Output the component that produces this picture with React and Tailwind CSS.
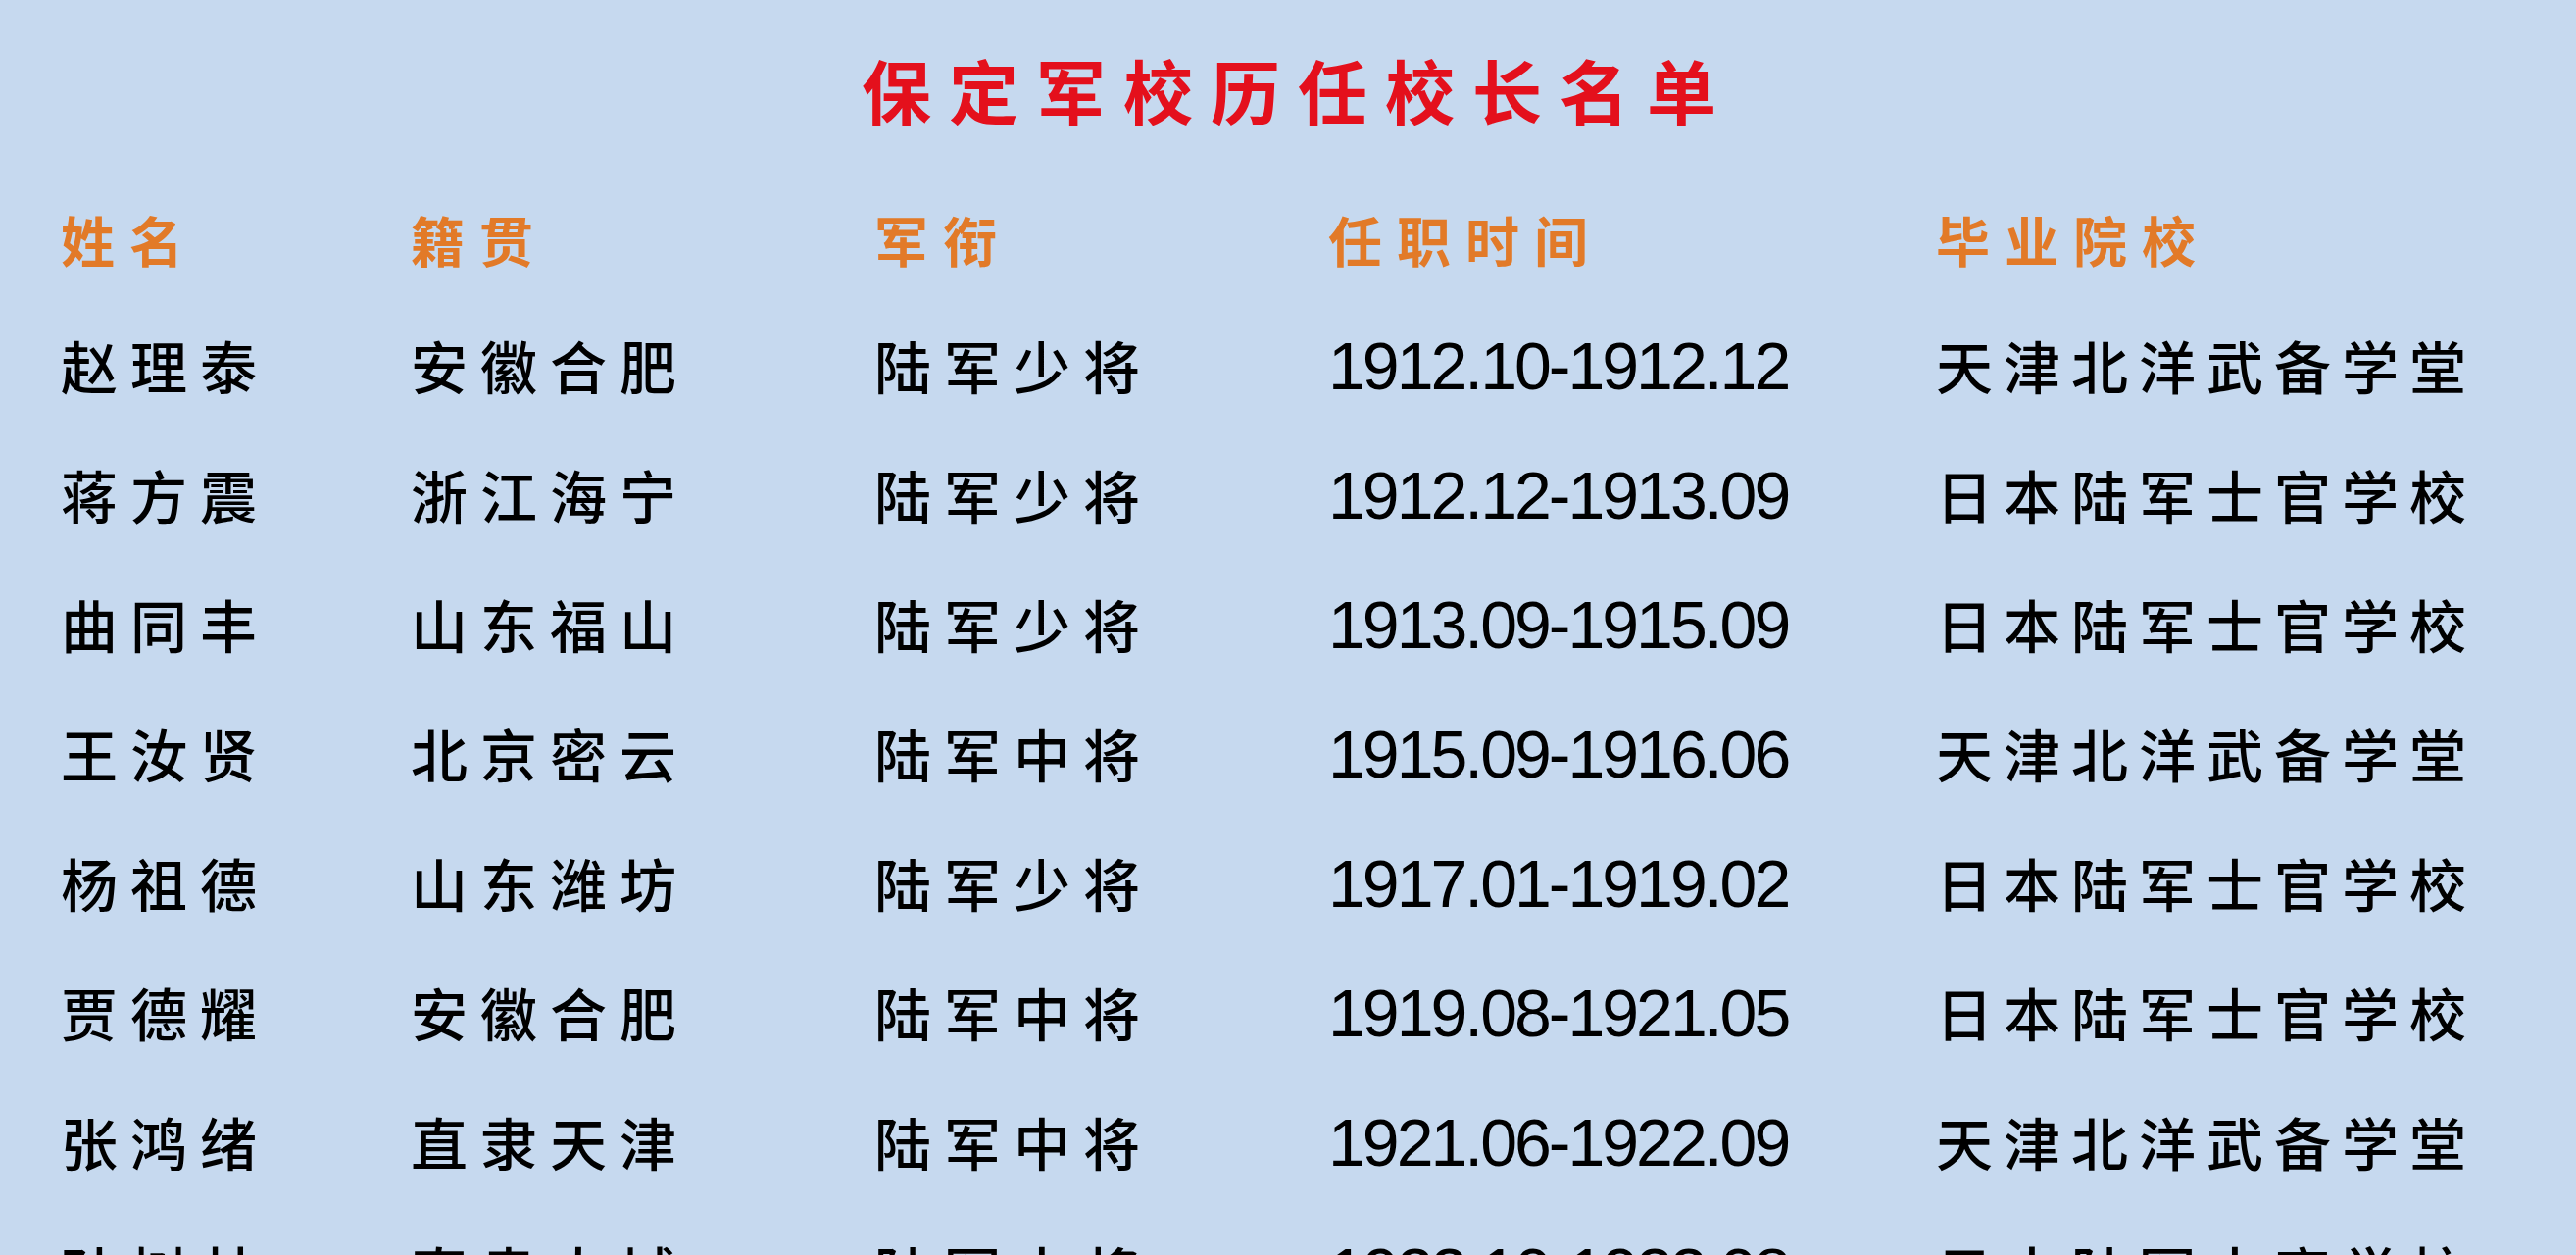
const rows = [
  ["赵理泰", "安徽合肥", "陆军少将", "1912.10-1912.12", "天津北洋武备学堂"],
  ["蒋方震", "浙江海宁", "陆军少将", "1912.12-1913.09", "日本陆军士官学校"],
  ["曲同丰", "山东福山", "陆军少将", "1913.09-1915.09", "日本陆军士官学校"],
  ["王汝贤", "北京密云", "陆军中将", "1915.09-1916.06", "天津北洋武备学堂"],
  ["杨祖德", "山东潍坊", "陆军少将", "1917.01-1919.02", "日本陆军士官学校"],
  ["贾德耀", "安徽合肥", "陆军中将", "1919.08-1921.05", "日本陆军士官学校"],
  ["张鸿绪", "直隶天津", "陆军中将", "1921.06-1922.09", "天津北洋武备学堂"],
  ["孙树林", "直隶大城", "陆军中将", "1922.10-1923.08", "日本陆军士官学校"],
];

const headers = ["姓名", "籍贯", "军衔", "任职时间", "毕业院校"];

const cjk = "font-['Noto_Sans_CJK_SC',sans-serif]";

export default function App() {
  return (
    <div className={`w-full h-[1280px] overflow-hidden bg-[#c6d9ef] ${cjk}`}>
      <div className="h-[180px] flex items-start justify-center pt-[40px] pl-[20px]">
        <h1 className="text-[71px] leading-[100px] font-bold tracking-[18px] text-[#e4101c]">
          保定军校历任校长名单
        </h1>
      </div>
      <div className="pl-[62px]">
        <div className="grid grid-cols-[357px_473px_463px_620px_1fr] h-[126px] items-center text-[55px] font-bold tracking-[15px] text-[#e27a28]">
          {headers.map((h) => (
            <div key={h} className="leading-none">{h}</div>
          ))}
        </div>
        {rows.map((r) => (
          <div
            key={r[0]}
            className="grid grid-cols-[357px_473px_463px_620px_1fr] h-[132px] items-center text-black"
          >
            <div className="text-[58px] leading-none font-medium tracking-[13px]">{r[0]}</div>
            <div className="text-[58px] leading-none font-medium tracking-[13px]">{r[1]}</div>
            <div className="text-[58px] leading-none font-medium tracking-[13px]">{r[2]}</div>
            <div className="text-[68px] leading-none font-['Liberation_Sans',sans-serif] tracking-[-3px] pt-[2px]">
              {r[3]}
            </div>
            <div className="text-[58px] leading-none font-medium tracking-[11px]">{r[4]}</div>
          </div>
        ))}
      </div>
    </div>
  );
}
